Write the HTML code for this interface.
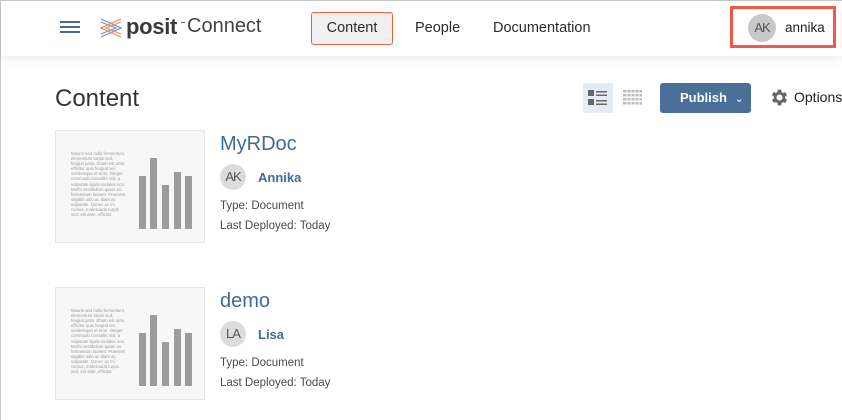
<!DOCTYPE html>
<html><head><meta charset="utf-8"><style>
*{margin:0;padding:0;box-sizing:border-box}
body{width:842px;height:420px;overflow:hidden;background:#fff;font-family:"Liberation Sans",sans-serif;position:relative;border-top:1px solid #c8c8c8;border-left:1px solid #c8c8c8}
.hdr{position:absolute;left:0;top:0;width:842px;height:55px;background:#fff;box-shadow:0 3px 10px rgba(0,0,0,.08)}
.abs{position:absolute}
.ham span{position:absolute;left:0;width:20px;height:1.5px;background:#4a6a90}
.nav{font-size:14.5px;color:#2b2b2b}
.thumb{position:absolute;width:150px;height:113px;background:#f7f7f7;border:1px solid #e6e6e6}
.bar{position:absolute;width:7px;background:#9c9c9c;bottom:13px}
.txt{position:absolute;left:15px;top:20px;width:56px;font-size:4.3px;line-height:5.1px;color:#9a9a9a}
.title{position:absolute;font-size:20px;color:#3f6b96}
.av{position:absolute;width:26px;height:26px;border-radius:50%;background:#dcdcdc;color:#555;font-size:13px;text-align:center;line-height:26px;letter-spacing:-1px}
.name{position:absolute;font-size:13px;color:#3f6b96;font-weight:bold}
.meta{position:absolute;font-size:11.5px;color:#4a4a4a}
</style></head><body>
<div class="hdr">
 <div class="abs ham" style="left:59px;top:20px"><span style="top:0"></span><span style="top:5px"></span><span style="top:10px"></span></div>
 <svg class="abs" style="left:99px;top:17px" width="22" height="20" viewBox="0 0 22 20">
  <path d="M1 1 L21 10 L1 19 M1 4 L16 10 L1 16" fill="none" stroke="#6b94c4" stroke-width="1.2"/>
  <path d="M21 1 L1 10 L21 19 M21 4 L6 10 L21 16" fill="none" stroke="#f08a5d" stroke-width="1.2"/>
 </svg>
 <div class="abs" style="left:125px;top:13px;font-size:22px;font-weight:bold;color:#3a3a3a;letter-spacing:-0.3px">posit</div>
 <div class="abs" style="left:180px;top:21px;width:4px;height:1px;background:#666"></div>
 <div class="abs" style="left:186px;top:14px;font-size:20px;color:#444">Connect</div>
 <div class="abs nav" style="left:310px;top:11px;width:82px;height:33px;border:1px solid #e8653a;border-radius:3px;background:#f0f0f0;text-align:center;line-height:31px">Content</div>
 <div class="abs nav" style="left:414px;top:19px">People</div>
 <div class="abs nav" style="left:492px;top:19px">Documentation</div>
 <div class="abs" style="left:729px;top:5px;width:106px;height:42px;border:3px solid #f2574a"></div>
 <div class="av" style="left:747px;top:13px;width:28px;height:28px;line-height:28px;background:#c8c8c8">AK</div>
 <div class="abs" style="left:784px;top:19px;font-size:13.5px;color:#222">annika</div>
</div>
<div class="abs" style="left:54px;top:84px;font-size:24px;color:#333">Content</div>
<div class="abs" style="left:582px;top:82px;width:30px;height:30px;background:#e4ecf5"></div>
<svg class="abs" style="left:587px;top:88px" width="20" height="18"><g fill="#666"><rect x="0" y="1" width="6" height="6"/><rect x="0" y="10" width="6" height="6"/><rect x="8" y="2" width="11" height="1.5"/><rect x="8" y="5.5" width="11" height="1.5"/><rect x="8" y="11" width="11" height="1.5"/><rect x="8" y="14.5" width="11" height="1.5"/></g></svg>
<svg class="abs" style="left:622px;top:88px" width="20" height="16"><g fill="#bbb"><rect x="0" y="1" width="19" height="2.5"/><rect x="0" y="5" width="19" height="2.5"/><rect x="0" y="9" width="19" height="2.5"/><rect x="0" y="13" width="19" height="2.5"/></g><g stroke="#fff" stroke-width="1"><line x1="4" y1="0" x2="4" y2="16"/><line x1="8" y1="0" x2="8" y2="16"/><line x1="12" y1="0" x2="12" y2="16"/><line x1="16" y1="0" x2="16" y2="16"/></g></svg>
<div class="abs" style="left:659px;top:82px;width:91px;height:30px;background:#4a6f99;border-radius:3px;color:#fff;font-size:13px;font-weight:bold;line-height:30px;padding-left:20px">Publish <span style="font-weight:normal;font-size:11px;margin-left:4px">&#8964;</span></div>
<svg class="abs" style="left:768px;top:86px" width="21" height="21" viewBox="0 0 24 24"><path fill="#666" d="M19.4 13a7.5 7.5 0 0 0 0-2l2.1-1.6-2-3.5-2.5 1a7 7 0 0 0-1.7-1L15 3h-4l-.4 2.7a7 7 0 0 0-1.7 1l-2.5-1-2 3.5L6.6 11a7.5 7.5 0 0 0 0 2l-2.1 1.6 2 3.5 2.5-1a7 7 0 0 0 1.7 1L11 21h4l.4-2.7a7 7 0 0 0 1.7-1l2.5 1 2-3.5zM13 15.5a3.5 3.5 0 1 1 0-7 3.5 3.5 0 0 1 0 7z" transform="translate(-1 0)"/></svg>
<div class="abs" style="left:793px;top:88px;font-size:14px;color:#222">Options</div>

<div class="thumb" style="left:54px;top:129px">
 <div class="txt">Mauris sed nulla fermentum, elementum turpis sed, feugiat justo. Etiam est ante, efficitur quis feugiat vel, scelerisque et eros. Integer commodo convallis nisl, a vulputate ligula sodales non. Morbi vestibulum quam eu fermentum laoreet. Praesent sagittis odio ac diam ac vulputate. Donec ac mi cursus, malesuada turpis sed, est ante, efficitur</div>
 <div class="bar" style="left:83px;height:53px"></div><div class="bar" style="left:94px;height:71px"></div><div class="bar" style="left:106px;height:44px"></div><div class="bar" style="left:118px;height:57px"></div><div class="bar" style="left:129px;height:53px"></div>
</div>
<div class="title" style="left:219px;top:132px">MyRDoc</div>
<div class="av" style="left:219px;top:163px">AK</div>
<div class="name" style="left:257px;top:169px">Annika</div>
<div class="meta" style="left:219px;top:199px">Type: Document</div>
<div class="meta" style="left:219px;top:219px">Last Deployed: Today</div>

<div class="thumb" style="left:54px;top:286px">
 <div class="txt">Mauris sed nulla fermentum, elementum turpis sed, feugiat justo. Etiam est ante, efficitur quis feugiat vel, scelerisque et eros. Integer commodo convallis nisl, a vulputate ligula sodales non. Morbi vestibulum quam eu fermentum laoreet. Praesent sagittis odio ac diam ac vulputate. Donec ac mi cursus, malesuada turpis sed, est ante, efficitur</div>
 <div class="bar" style="left:83px;height:53px"></div><div class="bar" style="left:94px;height:71px"></div><div class="bar" style="left:106px;height:44px"></div><div class="bar" style="left:118px;height:57px"></div><div class="bar" style="left:129px;height:53px"></div>
</div>
<div class="title" style="left:219px;top:289px">demo</div>
<div class="av" style="left:219px;top:320px">LA</div>
<div class="name" style="left:257px;top:326px">Lisa</div>
<div class="meta" style="left:219px;top:356px">Type: Document</div>
<div class="meta" style="left:219px;top:376px">Last Deployed: Today</div>
</body></html>
